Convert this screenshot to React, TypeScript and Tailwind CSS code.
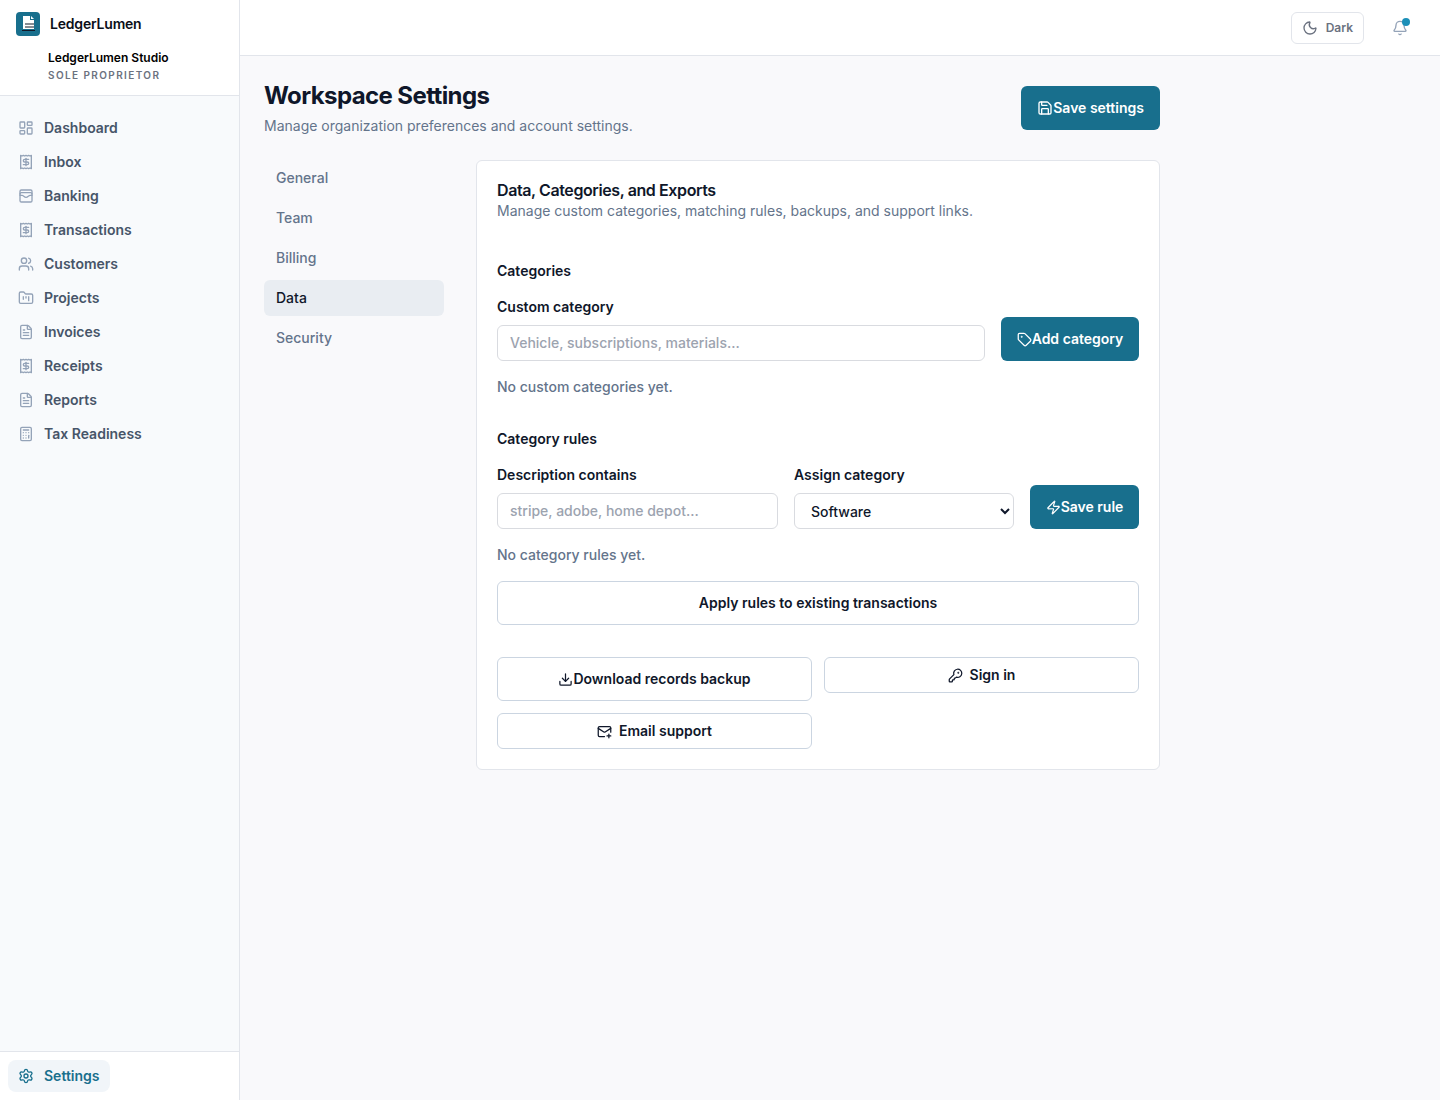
import {
  Bell,
  Calculator,
  Download,
  FileText,
  FolderKanban,
  KeyRound,
  LayoutDashboard,
  MailPlus,
  Moon,
  Receipt,
  Save,
  Settings,
  Tag,
  Users,
  WalletCards,
  Zap,
} from "lucide-react";

const nav = [
  { label: "Dashboard", icon: LayoutDashboard },
  { label: "Inbox", icon: Receipt },
  { label: "Banking", icon: WalletCards },
  { label: "Transactions", icon: Receipt },
  { label: "Customers", icon: Users },
  { label: "Projects", icon: FolderKanban },
  { label: "Invoices", icon: FileText },
  { label: "Receipts", icon: Receipt },
  { label: "Reports", icon: FileText },
  { label: "Tax Readiness", icon: Calculator },
];

const tabs = ["General", "Team", "Billing", "Data", "Security"];

const primaryBtn =
  "flex h-11 shrink-0 items-center justify-center whitespace-nowrap rounded-md bg-[#186f8d] text-sm font-semibold text-white";
const outlineBtn =
  "flex items-center justify-center whitespace-nowrap rounded-md border border-[#cbd5e1] bg-white text-sm font-semibold text-[#0f172a]";
const inputCls =
  "h-9 rounded-md border border-[#d9dbe0] bg-white px-3 pb-0.5 text-sm font-medium text-[#0f172a] placeholder:text-[#9ca3af] outline-none";

export default function App() {
  return (
    <div className="flex min-h-[1100px] bg-[#f9f9fb] font-['Inter',sans-serif] text-[#0f172a]">
      <aside className="flex w-[240px] shrink-0 flex-col border-r border-[#e2e5eb] bg-[#f8fafc]">
        <div className="h-[96px] border-b border-[#e2e5eb] bg-white px-4 pt-3">
          <div className="flex items-center gap-2.5">
            <svg width="24" height="24" viewBox="0 0 24 24" className="rounded">
              <rect width="24" height="24" fill="#186f8d" />
              <path d="M7 4h7v4h4v9H7z" fill="#fff" />
              <path d="M15 4l3 3h-3z" fill="#fff" />
              <path d="M9 12h9M9 15h9M6 18.5h13" stroke="#111827" strokeWidth="1" />
            </svg>
            <span className="text-sm font-semibold leading-6 tracking-[-0.2px] text-[#0b0f19]">LedgerLumen</span>
          </div>
          <div className="mt-[14px] pl-8">
            <div className="text-xs font-semibold leading-4 text-black">LedgerLumen Studio</div>
            <div className="mt-[2px] text-[10px] font-semibold leading-[14px] tracking-[0.14em] text-[#6b7280]">
              SOLE PROPRIETOR
            </div>
          </div>
        </div>
        <nav className="flex flex-1 flex-col gap-0.5 px-2 py-4">
          {nav.map(({ label, icon: Icon }) => (
            <div key={label} className="flex h-8 items-center gap-2.5 px-2.5 text-sm font-semibold text-[#475569]">
              <Icon size={16} strokeWidth={2} className="text-[#94a3b8]" />
              {label}
            </div>
          ))}
        </nav>
        <div className="h-[49px] border-t border-[#e2e5eb] bg-white px-2 pt-2">
          <div className="flex h-8 w-fit items-center gap-2.5 rounded-lg bg-[#f1f5f9] px-2.5 text-sm font-semibold text-[#186f8d]">
            <Settings size={16} strokeWidth={2} />
            Settings
          </div>
        </div>
      </aside>

      <div className="flex min-w-0 flex-1 flex-col">
        <header className="flex h-14 items-center justify-end gap-5 border-b border-[#e2e5eb] bg-white pr-6">
          <button className="flex h-8 items-center gap-2 rounded-md border border-[#e2e5eb] bg-white px-2.5 text-xs font-semibold text-[#6b7280]">
            <Moon size={16} strokeWidth={2} />
            Dark
          </button>
          <div className="relative mx-2 flex h-8 w-4 items-center justify-center">
            <Bell size={16} strokeWidth={2} className="text-[#94a3b8]" />
            <span className="absolute right-[-2px] top-1.5 h-2 w-2 rounded-full bg-[#1c8fb8]" />
          </div>
        </header>

        <main className="w-[920px] pl-6 pt-6">
          <div className="flex items-center justify-between">
            <div>
              <h1 className="text-2xl font-bold leading-8 tracking-tight text-[#0f172a]">Workspace Settings</h1>
              <p className="mt-1 text-sm text-[#64748b]">Manage organization preferences and account settings.</p>
            </div>
            <button className={primaryBtn + " px-4"}>
              <Save size={16} strokeWidth={2} />
              Save settings
            </button>
          </div>

          <div className="mt-6 flex items-start gap-8">
            <div className="flex w-[180px] shrink-0 flex-col gap-1">
              {tabs.map((t) => (
                <div
                  key={t}
                  className={
                    t === "Data"
                      ? "flex h-9 items-center rounded-md bg-[#e9edf2] px-3 text-sm font-medium text-[#0f172a]"
                      : "flex h-9 items-center px-3 text-sm font-medium text-[#64748b]"
                  }
                >
                  {t}
                </div>
              ))}
            </div>

            <section className="flex-1 rounded-md border border-[#e2e5eb] bg-white px-5 pb-5 pt-[19px]">
              <h2 className="text-base font-semibold leading-5 tracking-tight text-[#0f172a]">
                Data, Categories, and Exports
              </h2>
              <p className="mt-px text-sm leading-5 text-[#64748b]">
                Manage custom categories, matching rules, backups, and support links.
              </p>

              <h3 className="mt-10 text-sm font-semibold leading-5">Categories</h3>
              <div className="mt-4 flex items-end gap-4">
                <label className="flex flex-1 flex-col gap-2">
                  <span className="text-sm font-semibold leading-5">Custom category</span>
                  <input className={inputCls} placeholder="Vehicle, subscriptions, materials..." />
                </label>
                <button className={primaryBtn + " w-[138px]"}>
                  <Tag size={15} strokeWidth={2} />
                  Add category
                </button>
              </div>
              <p className="mt-4 text-sm font-medium leading-5 text-[#64748b]">No custom categories yet.</p>

              <h3 className="mt-8 text-sm font-semibold leading-5">Category rules</h3>
              <div className="mt-4 flex items-end gap-4">
                <label className="flex w-[281px] flex-col gap-2">
                  <span className="text-sm font-semibold leading-5">Description contains</span>
                  <input className={inputCls} placeholder="stripe, adobe, home depot..." />
                </label>
                <label className="flex w-[220px] flex-col gap-2">
                  <span className="text-sm font-semibold leading-5">Assign category</span>
                  <select className="h-9 rounded-md border border-[#d9dbe0] bg-white px-3 text-sm font-medium text-[#0f172a] outline-none">
                    <option>Software</option>
                  </select>
                </label>
                <button className={primaryBtn + " w-[109px]"}>
                  <Zap size={15} strokeWidth={2} />
                  Save rule
                </button>
              </div>
              <p className="mt-4 text-sm font-medium leading-5 text-[#64748b]">No category rules yet.</p>

              <button className={outlineBtn + " mt-4 h-11 w-full"}>Apply rules to existing transactions</button>

              <div className="mt-8 grid grid-cols-2 items-start gap-x-3 gap-y-3">
                <button className={outlineBtn + " h-11"}>
                  <Download size={15} strokeWidth={2} />
                  Download records backup
                </button>
                <button className={outlineBtn + " h-9 gap-[7px]"}>
                  <KeyRound size={15} strokeWidth={2} />
                  Sign in
                </button>
                <button className={outlineBtn + " h-9 gap-[7px]"}>
                  <MailPlus size={15} strokeWidth={2} />
                  Email support
                </button>
              </div>
            </section>
          </div>
        </main>
      </div>
    </div>
  );
}
